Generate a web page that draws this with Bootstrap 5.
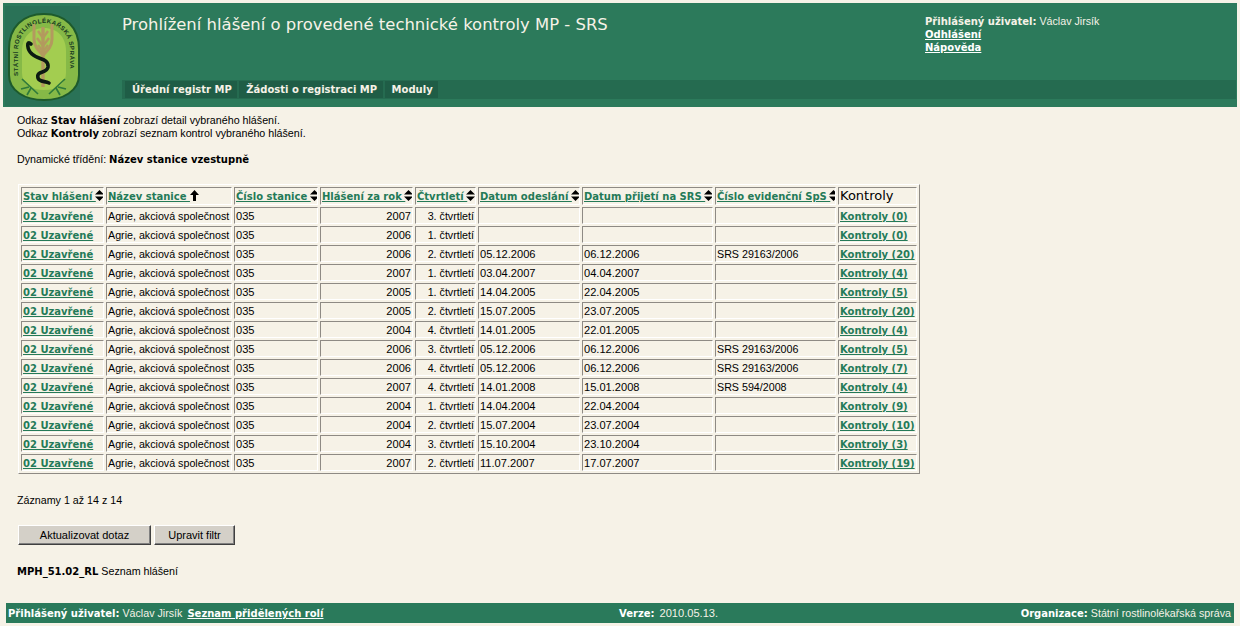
<!DOCTYPE html>
<html lang="cs"><head><meta charset="utf-8"><title>Prohlížení hlášení</title>
<link href="https://cdn.jsdelivr.net/npm/bootstrap@5.3.0/dist/css/bootstrap.min.css" rel="stylesheet">
<style>
html,body{height:626px;overflow:hidden}
body{background:#f6f2e7;color:#000;font:10.7px/13px "Liberation Sans",Arial,sans-serif;}
b{font:700 10px/1 "DejaVu Sans",sans-serif}
.shell{padding:3px 3px 0;height:626px}
.hdr{background:#2c7a5b;height:104px;color:#fff}
.logobox{width:77px;height:104px;flex:none}
.hdrmain{width:843px;flex:none;padding-left:42px}
.ttl{font:16.45px/22px "DejaVu Sans",sans-serif;margin:0;padding-top:11px;height:77px;color:#f6f2e7}
.menustrip{background:#256b50;height:19px;padding:1px 0 0 3px;gap:2px;width:1114px}
.menuitem{background:#1f5d46;color:#f6f2e7;height:17px;padding:0 5.5px 0 7px;font:700 10px/17px "DejaVu Sans",sans-serif;text-decoration:none}
.menuitem:last-child{padding-right:5px}
.usr{padding:12px 0 0 2px;line-height:13px;color:#f6f2e7}
.usr a,.foot a{color:#fff;font:700 10px/1 "DejaVu Sans",sans-serif}
.main{padding:7px 0 0 14px}
.gridwrap{margin:18px 0 0 1px}
.tbl{border-collapse:separate;border-spacing:2px;table-layout:fixed;width:902px;border:1px solid;border-color:#fff #8e8a84 #8e8a84 #fff}
.tbl td,.tbl th{border:1px solid;border-color:#8e8a84 #fff #fff #8e8a84;padding:1px 1px 0;height:17px;line-height:14px;vertical-align:top;white-space:nowrap;overflow:hidden;font-weight:400}
.tbl th{height:18px}
.tbl a{color:#247a58;font:700 10px/1 "DejaVu Sans",sans-serif}
.tbl th.plain{font:13px/16px "DejaVu Sans",sans-serif;padding-top:0}
.tbl td.fig{font-size:11.1px}
.sorter{vertical-align:-1px;margin-left:-1px}
.sorter.upw{margin-left:0}
.rec{margin:20px 0 0}
.acts{margin:18px 0 0 1px;gap:3px}
.wbtn{background:#d4d0c8;border:1px solid;border-color:#fff #404040 #404040 #fff;border-radius:0;height:20px;padding:0;font:11px/17px "Liberation Sans",sans-serif;color:#000;box-shadow:inset -1px -1px 0 #808080}
.wbtn:hover{background:#d4d0c8;border-color:#fff #404040 #404040 #fff}
.w1{width:133px}.w2{width:81px}
.scr{margin:20px 0 0}
.foot{background:#2a7a5b;height:20px;margin:25px 0 0 3px;width:1228px;padding:0 3px 0 2px;color:#f6f2e7;line-height:20px;position:relative}
.foot b{color:#fff}
.rolelink{margin-left:2px}
.vers{position:absolute;left:613px;top:0}
.datev{margin-left:2px;font-size:11.1px}
</style></head><body>
<div class="shell">
<div class="hdr d-flex">
 <div class="logobox">
 <svg width="77" height="104" viewBox="0 0 77 104" role="img" aria-label="Státní rostlinolékařská správa">
  <rect x="2" y="3" width="76" height="100" fill="#2a7257"/>
  <path d="M6 46C6 24 20 11 41 11S76 24 76 46V72C76 88 60 97 41 97S6 88 6 72Z" fill="#86b947" stroke="#1d5a2c" stroke-width="2"/>
  <path d="M19 48C19 34 28 25 41 25S63 34 63 48V70C63 81 54 87 41 87S19 81 19 70Z" fill="#a3cd50"/>
  <defs><path id="arcp" d="M15 73V48C15 32 26 20 41 20S67 32 67 48V73"/></defs>
  <text font-family="Liberation Sans,sans-serif" font-size="6.2" font-weight="700" fill="#17391f"><textPath href="#arcp" textLength="128" lengthAdjust="spacing">STÁTNÍ ROSTLINOLÉKAŘSKÁ SPRÁVA</textPath></text>
  <g fill="none" stroke="#b39a5e">
   <path d="M40 24V84" stroke-width="3.4"/>
   <path d="M31 21V36C31 44 36 48 40 52M49 21V36C49 44 44 48 40 52" stroke-width="3"/>
   <path d="M35 28L40 35L45 28M34 35L40 43L46 35M35 42L40 49L45 42" stroke-width="2.4"/>
  </g>
  <path d="M28 41C23 36 24 47 29 51C35 57 46 55 45 64C44 71 33 67 35 75C36 79 42 78 46 80" fill="none" stroke="#0c1a12" stroke-width="3.6" stroke-linecap="round"/>
  <path d="M19 76L35 91M18 86L26 84M24 92L28 85M62 76L46 91M63 86L55 84M57 92L53 85" fill="none" stroke="#2f7a3a" stroke-width="1.7"/>
 </svg>
 </div>
 <div class="hdrmain">
  <h1 class="ttl">Prohlížení hlášení o provedené technické kontroly MP - SRS</h1>
  <div class="menustrip d-flex">
   <a class="menuitem" href="#">Úřední registr MP</a><a class="menuitem" href="#">Žádosti o registraci MP</a><a class="menuitem" href="#">Moduly</a>
  </div>
 </div>
 <div class="usr">
  <b>Přihlášený uživatel:</b> Václav Jirsík<br><a href="#">Odhlášení</a><br><a href="#">Nápověda</a>
 </div>
</div>
<div class="main">
 <div>Odkaz <b>Stav hlášení</b> zobrazí detail vybraného hlášení.<br>Odkaz <b>Kontroly</b> zobrazí seznam kontrol vybraného hlášení.<br><br>Dynamické třídění: <b>Název stanice vzestupně</b></div>
 <div class="gridwrap">
 <table class="tbl">
 <colgroup><col style="width:83px"><col style="width:126px"><col style="width:84px"><col style="width:93px"><col style="width:61px"><col style="width:102px"><col style="width:131px"><col style="width:121px"><col style="width:79px"></colgroup>
 <thead><tr>
 <th><a href="#">Stav hlášení </a><svg class="sorter" width="9" height="11" viewBox="0 0 9 11"><path d="M4.5 0L9 4.5H0ZM0 6.5H9L4.5 11Z"/></svg></th>
 <th><a href="#">Název stanice </a><svg class="sorter upw" width="9" height="11" viewBox="0 0 9 11"><path d="M4.5 0L9 5H6V11H3V5H0Z"/></svg></th>
 <th><a href="#">Číslo stanice </a><svg class="sorter" width="9" height="11" viewBox="0 0 9 11"><path d="M4.5 0L9 4.5H0ZM0 6.5H9L4.5 11Z"/></svg></th>
 <th><a href="#">Hlášení za rok </a><svg class="sorter" width="9" height="11" viewBox="0 0 9 11"><path d="M4.5 0L9 4.5H0ZM0 6.5H9L4.5 11Z"/></svg></th>
 <th><a href="#">Čtvrtletí </a><svg class="sorter" width="9" height="11" viewBox="0 0 9 11"><path d="M4.5 0L9 4.5H0ZM0 6.5H9L4.5 11Z"/></svg></th>
 <th><a href="#">Datum odeslání </a><svg class="sorter" width="9" height="11" viewBox="0 0 9 11"><path d="M4.5 0L9 4.5H0ZM0 6.5H9L4.5 11Z"/></svg></th>
 <th><a href="#">Datum přijetí na SRS </a><svg class="sorter" width="9" height="11" viewBox="0 0 9 11"><path d="M4.5 0L9 4.5H0ZM0 6.5H9L4.5 11Z"/></svg></th>
 <th><a href="#">Číslo evidenční SpS </a><svg class="sorter" width="9" height="11" viewBox="0 0 9 11"><path d="M4.5 0L9 4.5H0ZM0 6.5H9L4.5 11Z"/></svg></th>
 <th class="plain">Kontroly</th>
 </tr></thead>
 <tbody>
 <tr><td><a href="#">02 Uzavřené</a></td><td>Agrie, akciová společnost</td><td class="fig">035</td><td class="fig text-end">2007</td><td class="text-end">3. čtvrtletí</td><td></td><td></td><td></td><td><a href="#">Kontroly (0)</a></td></tr>
 <tr><td><a href="#">02 Uzavřené</a></td><td>Agrie, akciová společnost</td><td class="fig">035</td><td class="fig text-end">2006</td><td class="text-end">1. čtvrtletí</td><td></td><td></td><td></td><td><a href="#">Kontroly (0)</a></td></tr>
 <tr><td><a href="#">02 Uzavřené</a></td><td>Agrie, akciová společnost</td><td class="fig">035</td><td class="fig text-end">2006</td><td class="text-end">2. čtvrtletí</td><td class="fig">05.12.2006</td><td class="fig">06.12.2006</td><td>SRS 29163/2006</td><td><a href="#">Kontroly (20)</a></td></tr>
 <tr><td><a href="#">02 Uzavřené</a></td><td>Agrie, akciová společnost</td><td class="fig">035</td><td class="fig text-end">2007</td><td class="text-end">1. čtvrtletí</td><td class="fig">03.04.2007</td><td class="fig">04.04.2007</td><td></td><td><a href="#">Kontroly (4)</a></td></tr>
 <tr><td><a href="#">02 Uzavřené</a></td><td>Agrie, akciová společnost</td><td class="fig">035</td><td class="fig text-end">2005</td><td class="text-end">1. čtvrtletí</td><td class="fig">14.04.2005</td><td class="fig">22.04.2005</td><td></td><td><a href="#">Kontroly (5)</a></td></tr>
 <tr><td><a href="#">02 Uzavřené</a></td><td>Agrie, akciová společnost</td><td class="fig">035</td><td class="fig text-end">2005</td><td class="text-end">2. čtvrtletí</td><td class="fig">15.07.2005</td><td class="fig">23.07.2005</td><td></td><td><a href="#">Kontroly (20)</a></td></tr>
 <tr><td><a href="#">02 Uzavřené</a></td><td>Agrie, akciová společnost</td><td class="fig">035</td><td class="fig text-end">2004</td><td class="text-end">4. čtvrtletí</td><td class="fig">14.01.2005</td><td class="fig">22.01.2005</td><td></td><td><a href="#">Kontroly (4)</a></td></tr>
 <tr><td><a href="#">02 Uzavřené</a></td><td>Agrie, akciová společnost</td><td class="fig">035</td><td class="fig text-end">2006</td><td class="text-end">3. čtvrtletí</td><td class="fig">05.12.2006</td><td class="fig">06.12.2006</td><td>SRS 29163/2006</td><td><a href="#">Kontroly (5)</a></td></tr>
 <tr><td><a href="#">02 Uzavřené</a></td><td>Agrie, akciová společnost</td><td class="fig">035</td><td class="fig text-end">2006</td><td class="text-end">4. čtvrtletí</td><td class="fig">05.12.2006</td><td class="fig">06.12.2006</td><td>SRS 29163/2006</td><td><a href="#">Kontroly (7)</a></td></tr>
 <tr><td><a href="#">02 Uzavřené</a></td><td>Agrie, akciová společnost</td><td class="fig">035</td><td class="fig text-end">2007</td><td class="text-end">4. čtvrtletí</td><td class="fig">14.01.2008</td><td class="fig">15.01.2008</td><td>SRS 594/2008</td><td><a href="#">Kontroly (4)</a></td></tr>
 <tr><td><a href="#">02 Uzavřené</a></td><td>Agrie, akciová společnost</td><td class="fig">035</td><td class="fig text-end">2004</td><td class="text-end">1. čtvrtletí</td><td class="fig">14.04.2004</td><td class="fig">22.04.2004</td><td></td><td><a href="#">Kontroly (9)</a></td></tr>
 <tr><td><a href="#">02 Uzavřené</a></td><td>Agrie, akciová společnost</td><td class="fig">035</td><td class="fig text-end">2004</td><td class="text-end">2. čtvrtletí</td><td class="fig">15.07.2004</td><td class="fig">23.07.2004</td><td></td><td><a href="#">Kontroly (10)</a></td></tr>
 <tr><td><a href="#">02 Uzavřené</a></td><td>Agrie, akciová společnost</td><td class="fig">035</td><td class="fig text-end">2004</td><td class="text-end">3. čtvrtletí</td><td class="fig">15.10.2004</td><td class="fig">23.10.2004</td><td></td><td><a href="#">Kontroly (3)</a></td></tr>
 <tr><td><a href="#">02 Uzavřené</a></td><td>Agrie, akciová společnost</td><td class="fig">035</td><td class="fig text-end">2007</td><td class="text-end">2. čtvrtletí</td><td class="fig">11.07.2007</td><td class="fig">17.07.2007</td><td></td><td><a href="#">Kontroly (19)</a></td></tr>
 </tbody></table>
 </div>
 <p class="rec">Záznamy 1 až 14 z 14</p>
 <div class="acts d-flex"><button class="btn wbtn w1" type="button">Aktualizovat dotaz</button><button class="btn wbtn w2" type="button">Upravit filtr</button></div>
 <p class="scr"><b>MPH_51.02_RL</b> Seznam hlášení</p>
</div>
<div class="foot d-flex justify-content-between">
 <div><b>Přihlášený uživatel:</b> Václav Jirsík <a class="rolelink" href="#">Seznam přidělených rolí</a></div>
 <div class="vers"><b>Verze:</b> <span class="datev">2010.05.13.</span></div>
 <div><b>Organizace:</b> Státní rostlinolékařská správa</div>
</div>
</div>
</body></html>
